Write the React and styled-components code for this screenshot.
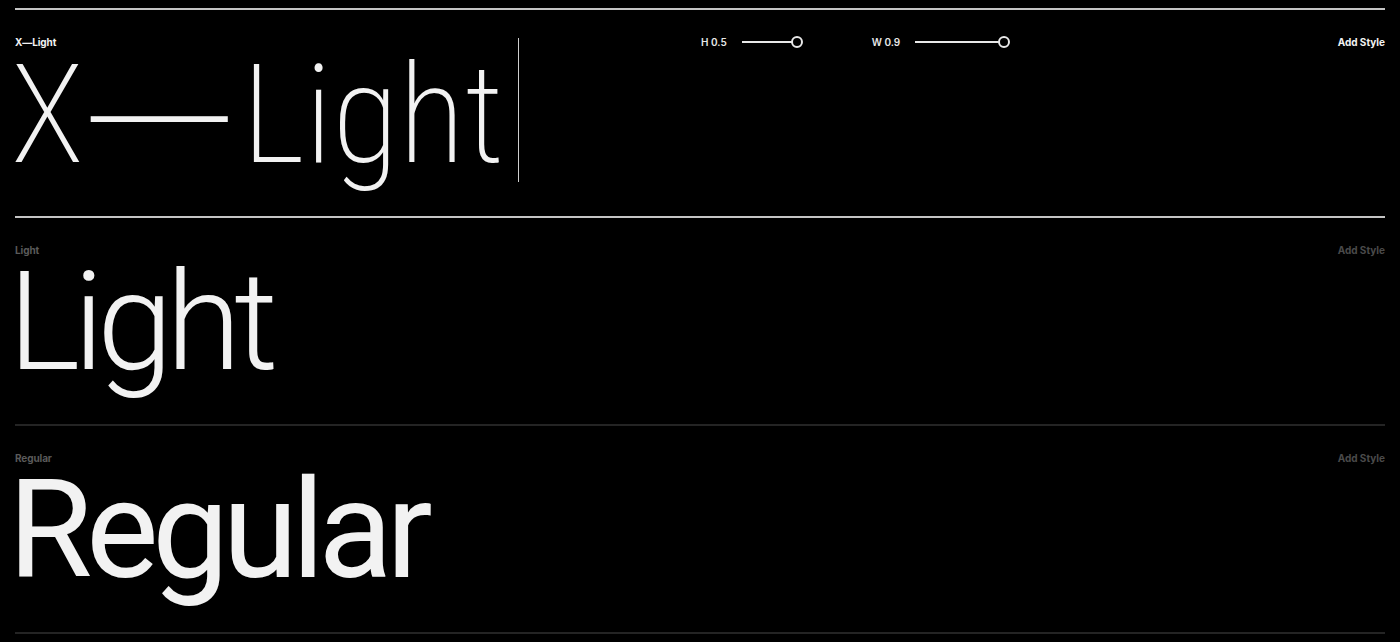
import React from 'react';
import styled, { createGlobalStyle } from 'styled-components';

const GlobalStyle = createGlobalStyle`
  html, body {
    margin: 0;
    padding: 0;
    background: #000;
  }
  body {
    font-family: Inter, "Liberation Sans", sans-serif;
    color: #f2f2f2;
  }
`;

const Page = styled.div`
  padding: 8px 15px 0;
  height: 642px;
  box-sizing: border-box;
  overflow: hidden;
`;

const Row = styled.section`
  border-top: 2px solid ${(p) => (p.$bright ? '#c4c4c4' : '#242424')};
  height: 208px;
  box-sizing: border-box;
  padding-top: 26px;
  position: relative;
`;

const Header = styled.div`
  display: flex;
  align-items: center;
  justify-content: space-between;
  height: 12px;
`;

const Label = styled.div`
  font-size: 10px;
  font-weight: 700;
  letter-spacing: -0.1px;
  color: ${(p) => (p.$active ? '#f2f2f2' : '#5a5a5a')};
`;

const Controls = styled.div`
  display: flex;
  align-items: center;
  gap: 80px;
  position: absolute;
  left: 686px;
  top: 26px;
  height: 12px;
`;

const Control = styled.div`
  display: flex;
  align-items: center;
  gap: 15px;
  font-size: 10px;
  font-weight: 600;
  color: #e8e8e8;
`;

const Track = styled.div`
  position: relative;
  width: ${(p) => p.$w}px;
  height: 2px;
  background: #e8e8e8;
`;

const Knob = styled.div`
  position: absolute;
  right: -11px;
  top: -5px;
  width: 8px;
  height: 8px;
  border: 2px solid #e8e8e8;
  border-radius: 50%;
  background: #000;
`;

const AddStyle = styled.div`
  font-size: 10px;
  font-weight: 700;
  color: ${(p) => (p.$active ? '#f2f2f2' : '#4a4a4a')};
`;

const Specimen = styled.div`
  display: flex;
  align-items: flex-start;
  margin-top: ${(p) => p.$top || 10}px;
  margin-left: ${(p) => p.$shift || -4}px;
`;

const SpecimenText = styled.div`
  font-family: Roboto, Inter, sans-serif;
  font-size: 137px;
  line-height: 112px;
  height: 112px;
  font-weight: ${(p) => p.$weight};
  letter-spacing: ${(p) => p.$tracking};
  font-stretch: ${(p) => p.$stretch || '100%'};
  white-space: nowrap;
  color: #f2f2f2;
`;

const Dash = styled.span`
  font-family: Inter, sans-serif;
  font-weight: 200;
  margin: 0 14px 0 7px;
`;

const Caret = styled.span`
  display: block;
  width: 1px;
  height: 144px;
  background: #cfcfcf;
  margin-left: 14px;
  margin-top: -18px;
`;

const Slider = ({ label, width }) => (
  <Control>
    <span>{label}</span>
    <Track $w={width}>
      <Knob />
    </Track>
  </Control>
);

export default function App() {
  return (
    <>
      <GlobalStyle />
      <Page>
        <Row $bright>
          <Header>
            <Label $active>X—Light</Label>
            <AddStyle $active>Add Style</AddStyle>
          </Header>
          <Controls>
            <Slider label="H 0.5" width={50} />
            <Slider label="W 0.9" width={84} />
          </Controls>
          <Specimen $top={8}>
            <SpecimenText $weight={200} $tracking="0px" $stretch="87%">
              X<Dash>—</Dash>Light
            </SpecimenText>
            <Caret />
          </Specimen>
        </Row>
        <Row $bright>
          <Header>
            <Label>Light</Label>
            <AddStyle>Add Style</AddStyle>
          </Header>
          <Specimen $shift={-7}>
            <SpecimenText $weight={300} $tracking="-7px">Light</SpecimenText>
          </Specimen>
        </Row>
        <Row>
          <Header>
            <Label>Regular</Label>
            <AddStyle>Add Style</AddStyle>
          </Header>
          <Specimen $shift={-7}>
            <SpecimenText $weight={400} $tracking="-6.5px">Regular</SpecimenText>
          </Specimen>
        </Row>
        <Row />
      </Page>
    </>
  );
}
